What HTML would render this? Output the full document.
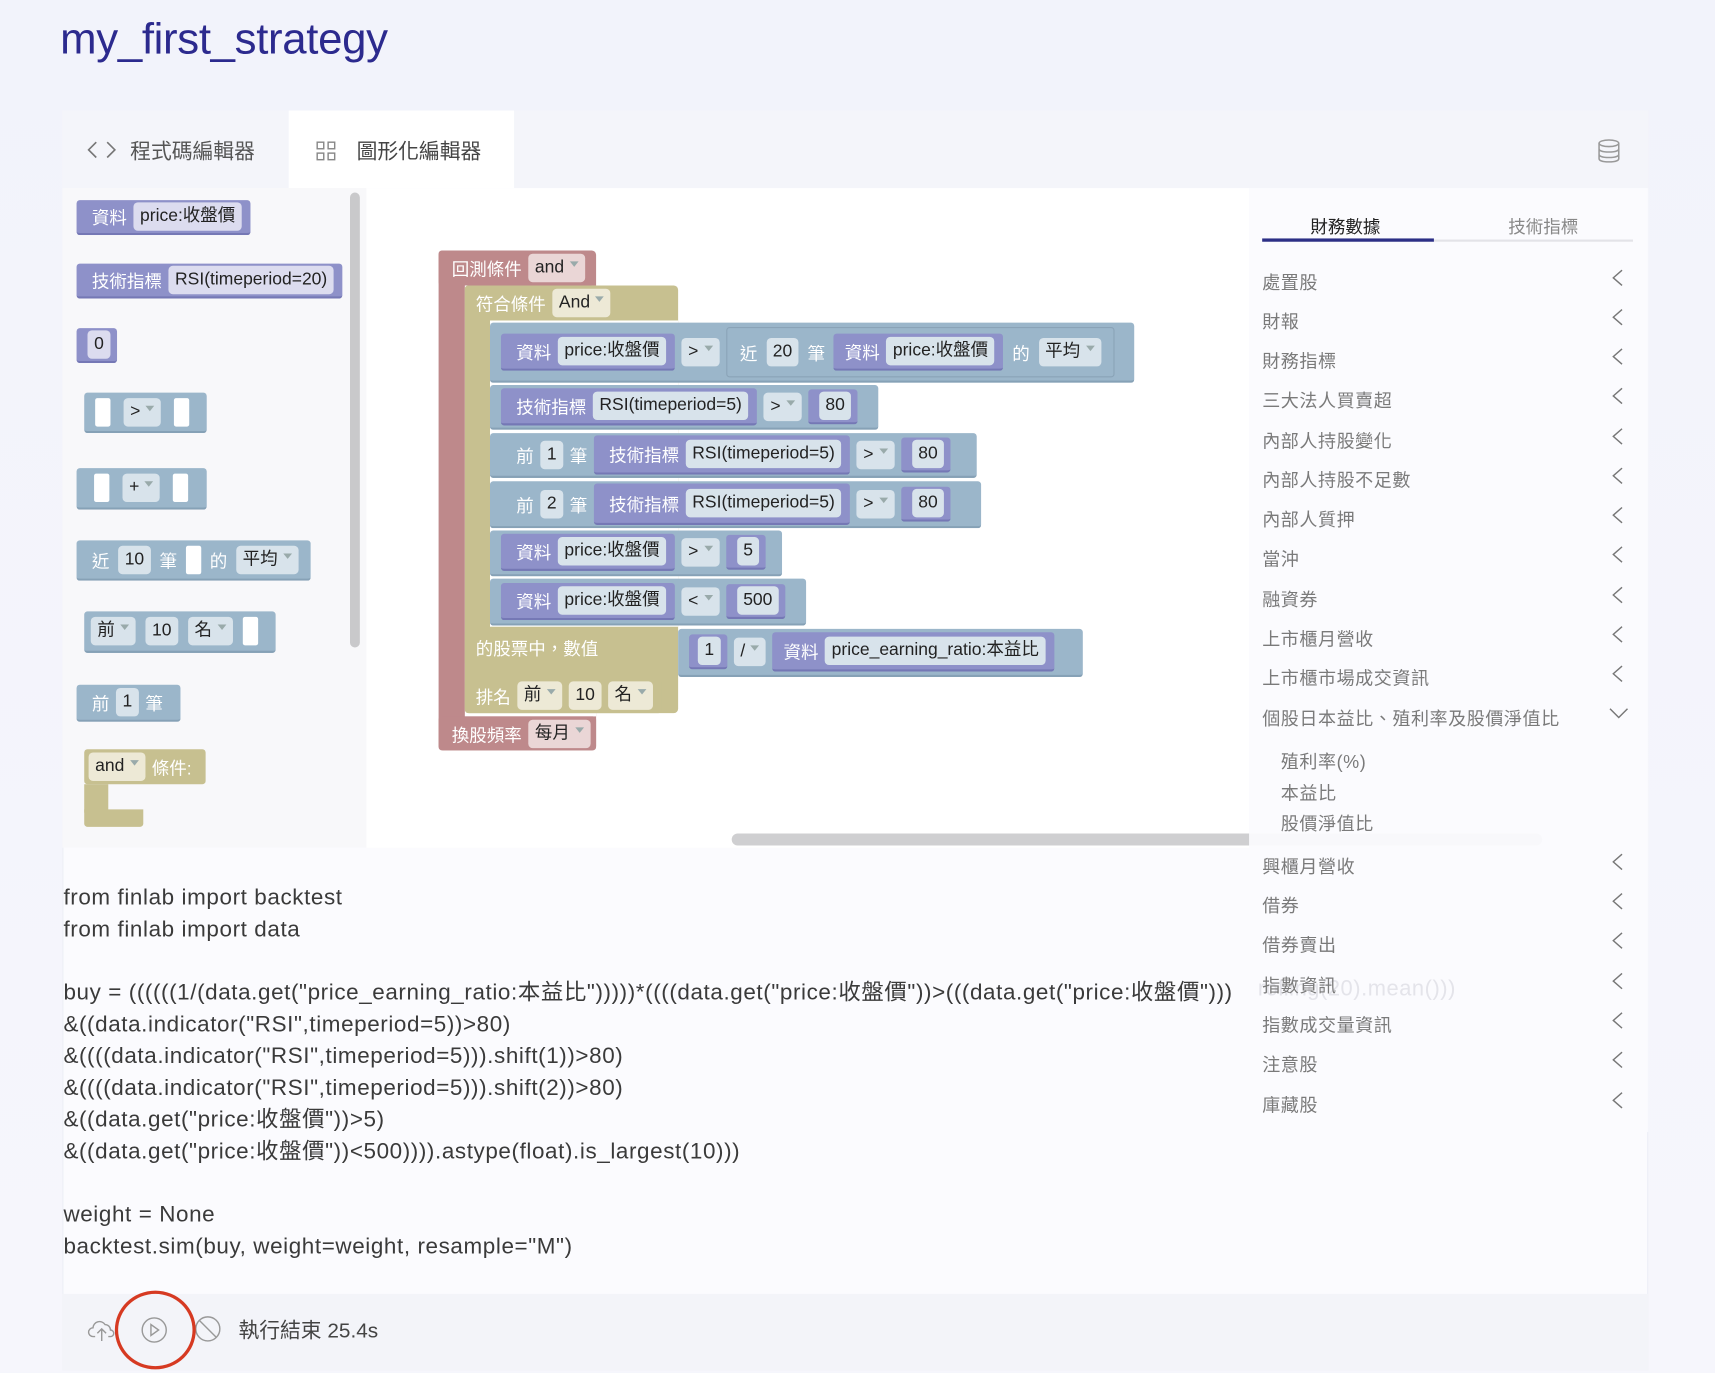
<!DOCTYPE html>
<html><head><meta charset="utf-8">
<style>
*{box-sizing:border-box;margin:0;padding:0}
body{width:1715px;height:1373px;overflow:hidden;background:#f4f5fb;font-family:"Liberation Sans","Noto Sans CJK TC",sans-serif}
#w{position:absolute;left:0;top:0;width:1568px;height:1255px;transform:scale(1.09375);transform-origin:0 0;background:linear-gradient(#f2f3fb,#f6f6fc)}
.a{position:absolute}
.t{font-size:40px;color:#2c2a8e;left:55px;top:14px;letter-spacing:-0.3px}
.blk{position:absolute;display:flex;align-items:center;gap:6px;padding:0 8px 0 14px;color:#fff;font-size:16px;white-space:nowrap;border-radius:3px}
.P{background:#8e91c9;border-bottom:2px solid #7578b5}
.S{background:#9bb6ca;border-bottom:2px solid #86a1b6}
.R{background:#be898b}
.K{background:#c7c090}
.f{background:#dcdcef;color:#222;padding:3px 6px;border-radius:4px;font-size:16px;line-height:20px}
.S .f,.f.s{background:#d8e3eb}
.R .f{background:#ead6d6}
.K .f{background:#ede9d6}
.dd::after{content:"";display:inline-block;margin-left:5px;border:4px solid transparent;border-top:5px solid #9aa;vertical-align:1px}
.nub{display:inline-block;width:14px;height:26px;background:#fff;border-radius:2px}
.code{left:58px;font-size:20.5px;color:#3a3a3a;line-height:29px;white-space:pre;letter-spacing:0.55px}
.li{position:absolute;left:1154px;font-size:16.5px;color:#7a7a7a;letter-spacing:0.5px}
.ch{position:absolute;left:1474px;width:10px;height:18px}
</style></head><body><div id="w">
<div class="a t">my_first_strategy</div>
<div class="a" style="left:57px;top:101px;width:1450px;height:1152px;background:#fbfbfe;border:1px solid #eceef6"></div>
<div class="a" style="left:57px;top:101px;width:1450px;height:71px;background:#f4f5fa"></div>
<div class="a" style="left:264px;top:101px;width:206px;height:71px;background:#fff"></div>
<svg class="a" style="left:78px;top:126px" width="30" height="22"><path d="M10 4 3 11l7 7M20 4l7 7-7 7" fill="none" stroke="#777" stroke-width="1.5"/></svg>
<div class="a" style="left:119px;top:124px;font-size:19px;color:#555">程式碼編輯器</div>
<svg class="a" style="left:289px;top:129px" width="18" height="18"><g fill="none" stroke="#888" stroke-width="1.3"><rect x="1" y="1" width="6" height="6"/><rect x="11" y="1" width="6" height="6"/><rect x="1" y="11" width="6" height="6"/><rect x="11" y="11" width="6" height="6"/></g></svg>
<div class="a" style="left:326px;top:124px;font-size:19px;color:#444">圖形化編輯器</div>
<svg class="a" style="left:1460px;top:126px" width="22" height="24"><g fill="none" stroke="#999" stroke-width="1.4"><ellipse cx="11" cy="5" rx="9" ry="3"/><path d="M2 5v14c0 2 4 3 9 3s9-1 9-3V5M2 10c0 2 4 3 9 3s9-1 9-3M2 15c0 2 4 3 9 3s9-1 9-3"/></g></svg>

<!-- toolbox -->
<div class="a" style="left:57px;top:172px;width:278px;height:603px;background:#f8f8fa"></div>
<div class="a" style="left:320px;top:176px;width:9px;height:416px;background:#c9c9cb;border-radius:5px"></div>
<div class="a" style="left:335px;top:172px;width:807px;height:603px;background:#fff"></div>

<div class="blk P" style="left:70px;top:183px;height:32px">資料 <span class="f">price:收盤價</span></div>
<div class="blk P" style="left:70px;top:241px;height:32px">技術指標 <span class="f">RSI(timeperiod=20)</span></div>
<div class="blk P" style="left:70px;top:300px;height:32px;padding-left:10px;padding-right:6px"><span class="f">0</span></div>
<div class="blk S" style="left:77px;top:359px;height:37px;width:112px;padding-left:10px;gap:12px"><span class="nub"></span><span class="f dd">&gt;</span><span class="nub"></span></div>
<div class="blk S" style="left:70px;top:428px;height:38px;width:119px;padding-left:16px;gap:12px"><span class="nub"></span><span class="f dd">+</span><span class="nub"></span></div>
<div class="blk S" style="left:70px;top:494px;height:37px;width:214px;gap:8px">近 <span class="f">10</span> 筆 <span class="nub"></span> 的 <span class="f dd">平均</span></div>
<div class="blk S" style="left:77px;top:559px;height:38px;width:175px;padding-left:6px;gap:9px"><span class="f dd">前</span> <span class="f">10</span> <span class="f dd">名</span><span class="nub"></span></div>
<div class="blk S" style="left:70px;top:626px;height:34px;width:95px">前 <span class="f">1</span> 筆</div>
<div class="blk K" style="left:77px;top:685px;height:32px;width:111px;padding-left:4px"><span class="f dd">and</span> 條件:</div>
<div class="a K" style="left:77px;top:717px;width:22px;height:26px"></div>
<div class="a K" style="left:77px;top:740px;width:54px;height:16px;border-radius:0 0 3px 3px"></div>

<!-- workspace blocks -->
<div class="a R" style="left:401px;top:229px;width:144px;height:457px;border-radius:4px"></div>
<div class="a" style="left:425px;top:261px;width:120px;height:394px;background:#fff"></div>
<div class="blk R" style="left:401px;top:229px;height:32px;padding-left:12px;border:none">回測條件 <span class="f dd">and</span></div>
<div class="blk R" style="left:401px;top:655px;height:31px;padding-left:12px;width:144px">換股頻率 <span class="f dd">每月</span></div>
<div class="a K" style="left:425px;top:261px;width:195px;height:391px;border-radius:4px"></div>
<div class="a" style="left:448px;top:293px;width:172px;height:280px;background:#fff"></div>
<div class="blk K" style="left:425px;top:261px;height:32px;padding-left:10px">符合條件 <span class="f dd">And</span></div>
<div class="blk K" style="left:425px;top:575px;height:34px;padding-left:10px">的股票中，數值</div>
<div class="blk K" style="left:425px;top:620px;height:32px;padding-left:10px">排名 <span class="f dd">前</span> <span class="f">10</span> <span class="f dd">名</span></div>

<div class="blk S" style="left:448px;top:295px;height:55px;width:589px;padding-left:10px">
<div class="blk P" style="position:static;height:34px;padding-left:14px">資料 <span class="f">price:收盤價</span></div>
<span class="f dd">&gt;</span>
<div class="blk S" style="position:static;height:46px;width:355px;border:1px solid #8aa3b7;padding-left:12px;gap:8px">近 <span class="f">20</span> 筆 <div class="blk P" style="position:static;height:34px;padding-left:10px">資料 <span class="f">price:收盤價</span></div> 的 <span class="f dd">平均</span></div>
</div>
<div class="blk S" style="left:448px;top:352px;height:41px;width:355px;padding-left:10px">
<div class="blk P" style="position:static;height:34px">技術指標 <span class="f">RSI(timeperiod=5)</span></div><span class="f dd">&gt;</span><div class="blk P" style="position:static;height:32px;padding:0 6px 0 10px"><span class="f">80</span></div></div>
<div class="blk S" style="left:448px;top:396px;height:41px;width:445px;padding-left:24px">前 <span class="f">1</span> 筆 
<div class="blk P" style="position:static;height:36px">技術指標 <span class="f">RSI(timeperiod=5)</span></div><span class="f dd">&gt;</span><div class="blk P" style="position:static;height:32px;padding:0 6px 0 10px"><span class="f">80</span></div></div>
<div class="blk S" style="left:448px;top:440px;height:43px;width:449px;padding-left:24px">前 <span class="f">2</span> 筆 
<div class="blk P" style="position:static;height:38px">技術指標 <span class="f">RSI(timeperiod=5)</span></div><span class="f dd">&gt;</span><div class="blk P" style="position:static;height:32px;padding:0 6px 0 10px"><span class="f">80</span></div></div>
<div class="blk S" style="left:448px;top:485px;height:42px;width:267px;padding-left:10px">
<div class="blk P" style="position:static;height:34px">資料 <span class="f">price:收盤價</span></div><span class="f dd">&gt;</span><div class="blk P" style="position:static;height:32px;padding:0 6px 0 10px"><span class="f">5</span></div></div>
<div class="blk S" style="left:448px;top:529px;height:43px;width:289px;padding-left:10px">
<div class="blk P" style="position:static;height:34px">資料 <span class="f">price:收盤價</span></div><span class="f dd">&lt;</span><div class="blk P" style="position:static;height:32px;padding:0 6px 0 10px"><span class="f">500</span></div></div>
<div class="blk S" style="left:620px;top:575px;height:44px;width:370px;padding-left:10px">
<div class="blk P" style="position:static;height:32px;padding:0 6px 0 8px"><span class="f">1</span></div><span class="f dd">/</span>
<div class="blk P" style="position:static;height:36px;padding-left:10px">資料 <span class="f">price_earning_ratio:本益比</span></div></div>

<div class="a" style="left:669px;top:762px;width:741px;height:11px;background:#cfcfd1;border-radius:6px"></div>

<!-- code -->
<div class="a code" style="top:806px">from finlab import backtest
from finlab import data

buy = ((((((1/(data.get("price_earning_ratio:本益比")))))*((((data.get("price:收盤價"))>(((data.get("price:收盤價")))
&amp;((data.indicator("RSI",timeperiod=5))&gt;80)
&amp;((((data.indicator("RSI",timeperiod=5))).shift(1))&gt;80)
&amp;((((data.indicator("RSI",timeperiod=5))).shift(2))&gt;80)
&amp;((data.get("price:收盤價"))&gt;5)
&amp;((data.get("price:收盤價"))&lt;500)))).astype(float).is_largest(10)))

weight = None
backtest.sim(buy, weight=weight, resample="M")</div>

<!-- right panel -->
<div class="a" style="left:1142px;top:172px;width:365px;height:863px;background:rgba(251,251,254,0.93)"></div>
<div class="a" style="left:1150px;top:893px;font-size:20px;color:#e4e4ea;letter-spacing:0.5px">rolling(20).mean()))</div>
<div class="a" style="left:1198px;top:194px;font-size:16px;color:#222">財務數據</div>
<div class="a" style="left:1379px;top:194px;font-size:16px;color:#888">技術指標</div>
<div class="a" style="left:1154px;top:219px;width:339px;height:2px;background:#e3e3e8"></div>
<div class="a" style="left:1154px;top:218px;width:157px;height:3px;background:#2c2f86"></div>

<svg width="0" height="0" style="position:absolute"><defs><symbol id="c" viewBox="0 0 10 18"><path d="M9 2 1 9l8 7" fill="none" stroke="#777" stroke-width="1.3"/></symbol></defs></svg>
<div class="li" style="top:245px">處置股</div><svg class="ch" style="top:245px"><use href="#c"/></svg>
<div class="li" style="top:281px">財報</div><svg class="ch" style="top:281px"><use href="#c"/></svg>
<div class="li" style="top:317px">財務指標</div><svg class="ch" style="top:317px"><use href="#c"/></svg>
<div class="li" style="top:353px">三大法人買賣超</div><svg class="ch" style="top:353px"><use href="#c"/></svg>
<div class="li" style="top:390px">內部人持股變化</div><svg class="ch" style="top:390px"><use href="#c"/></svg>
<div class="li" style="top:426px">內部人持股不足數</div><svg class="ch" style="top:426px"><use href="#c"/></svg>
<div class="li" style="top:462px">內部人質押</div><svg class="ch" style="top:462px"><use href="#c"/></svg>
<div class="li" style="top:498px">當沖</div><svg class="ch" style="top:498px"><use href="#c"/></svg>
<div class="li" style="top:535px">融資券</div><svg class="ch" style="top:535px"><use href="#c"/></svg>
<div class="li" style="top:571px">上市櫃月營收</div><svg class="ch" style="top:571px"><use href="#c"/></svg>
<div class="li" style="top:607px">上市櫃市場成交資訊</div><svg class="ch" style="top:607px"><use href="#c"/></svg>
<div class="li" style="top:644px">個股日本益比、殖利率及股價淨值比</div>
<svg class="a" style="left:1471px;top:646px" width="18" height="12"><path d="M1 2l8 8 8-8" fill="none" stroke="#777" stroke-width="1.3"/></svg>
<div class="li" style="top:683px;left:1171px">殖利率(%)</div>
<div class="li" style="top:712px;left:1171px">本益比</div>
<div class="li" style="top:740px;left:1171px">股價淨值比</div>
<div class="li" style="top:779px">興櫃月營收</div><svg class="ch" style="top:779px"><use href="#c"/></svg>
<div class="li" style="top:815px">借券</div><svg class="ch" style="top:815px"><use href="#c"/></svg>
<div class="li" style="top:851px">借券賣出</div><svg class="ch" style="top:851px"><use href="#c"/></svg>
<div class="li" style="top:888px">指數資訊</div><svg class="ch" style="top:888px"><use href="#c"/></svg>
<div class="li" style="top:924px">指數成交量資訊</div><svg class="ch" style="top:924px"><use href="#c"/></svg>
<div class="li" style="top:960px">注意股</div><svg class="ch" style="top:960px"><use href="#c"/></svg>
<div class="li" style="top:997px">庫藏股</div><svg class="ch" style="top:997px"><use href="#c"/></svg>

<!-- bottom bar -->
<div class="a" style="left:57px;top:1183px;width:1450px;height:70px;background:#f3f4f9"></div>
<svg class="a" style="left:80px;top:1204px" width="26" height="24"><path d="M7 18H5a4 4 0 0 1 0-8 6 6 0 0 1 11-3 5 5 0 0 1 5 5 3 3 0 0 1 0 6h-2M13 22V12M9 15l4-4 4 4" fill="none" stroke="#999" stroke-width="1.3"/></svg>
<svg class="a" style="left:128px;top:1203px" width="26" height="26"><circle cx="13" cy="13" r="11" fill="none" stroke="#999" stroke-width="1.3"/><path d="M10 8v10l7-5z" fill="none" stroke="#999" stroke-width="1.3"/></svg>
<svg class="a" style="left:177px;top:1202px" width="26" height="26"><circle cx="13" cy="13" r="11" fill="none" stroke="#999" stroke-width="1.3"/><path d="M5 5l16 16" stroke="#999" stroke-width="1.3"/></svg>
<div class="a" style="left:105px;top:1180px;width:74px;height:72px;border:3px solid #d63a22;border-radius:50%"></div>
<div class="a" style="left:218px;top:1202px;font-size:19px;color:#444">執行結束 25.4s</div>
</div></body></html>
